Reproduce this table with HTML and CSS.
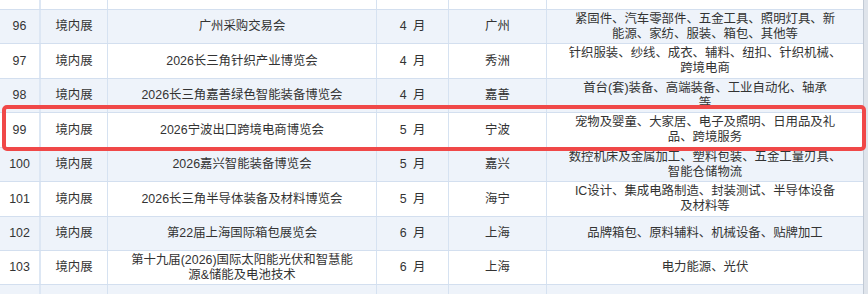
FILE: index.html
```html
<!DOCTYPE html>
<html lang="zh-CN">
<head>
<meta charset="utf-8">
<title>展会列表</title>
<link rel="stylesheet" href="styles.css">
</head>
<body>
<div class="page">
  <div class="table">
    <div class="row r95"><div class="c c1"></div><div class="c c2"></div><div class="c c3"></div><div class="c c4"></div><div class="c c5"></div><div class="c c6"></div></div>
    <div class="row alt h34"><div class="c c1">96</div><div class="c c2">境内展</div><div class="c c3">广州采购交易会</div><div class="c c4">4 月</div><div class="c c5">广州</div><div class="c c6">紧固件、汽车零部件、五金工具、照明灯具、新<br>能源、家纺、服装、箱包、其他等</div></div>
    <div class="row h35"><div class="c c1">97</div><div class="c c2">境内展</div><div class="c c3">2026长三角针织产业博览会</div><div class="c c4">4 月</div><div class="c c5">秀洲</div><div class="c c6">针织服装、纱线、成衣、辅料、纽扣、针织机械、<br>跨境电商</div></div>
    <div class="row alt h34"><div class="c c1">98</div><div class="c c2">境内展</div><div class="c c3">2026长三角嘉善绿色智能装备博览会</div><div class="c c4">4 月</div><div class="c c5">嘉善</div><div class="c c6">首台(套)装备、高端装备、工业自动化、轴承<br>等</div></div>
    <div class="row h35"><div class="c c1">99</div><div class="c c2">境内展</div><div class="c c3">2026宁波出口跨境电商博览会</div><div class="c c4">5 月</div><div class="c c5">宁波</div><div class="c c6">宠物及婴童、大家居、电子及照明、日用品及礼<br>品、跨境服务</div></div>
    <div class="row alt h34"><div class="c c1">100</div><div class="c c2">境内展</div><div class="c c3">2026嘉兴智能装备博览会</div><div class="c c4">5 月</div><div class="c c5">嘉兴</div><div class="c c6">数控机床及金属加工、塑料包装、五金工量刃具、<br>智能仓储物流</div></div>
    <div class="row h35"><div class="c c1">101</div><div class="c c2">境内展</div><div class="c c3">2026长三角半导体装备及材料博览会</div><div class="c c4">5 月</div><div class="c c5">海宁</div><div class="c c6">IC设计、集成电路制造、封装测试、半导体设备<br>及材料等</div></div>
    <div class="row alt h34"><div class="c c1">102</div><div class="c c2">境内展</div><div class="c c3">第22届上海国际箱包展览会</div><div class="c c4">6 月</div><div class="c c5">上海</div><div class="c c6">品牌箱包、原料辅料、机械设备、贴牌加工</div></div>
    <div class="row h34"><div class="c c1">103</div><div class="c c2">境内展</div><div class="c c3">第十九届(2026)国际太阳能光伏和智慧能<br>源&amp;储能及电池技术</div><div class="c c4">6 月</div><div class="c c5">上海</div><div class="c c6">电力能源、光伏</div></div>
    <div class="row alt r104"><div class="c c1"></div><div class="c c2"></div><div class="c c3"></div><div class="c c4"></div><div class="c c5"></div><div class="c c6"></div></div>
  </div>
  <div class="edge"></div>
  <div class="highlight"></div>
</div>
</body>
</html>
```

FILE: styles.css
```css
* { box-sizing: border-box; }
html, body { margin: 0; padding: 0; background: #ffffff; }
body {
  font-family: "Liberation Sans", "Noto Sans CJK SC", sans-serif;
  font-size: 12.4px;
  color: #333333;
}
.page {
  position: relative;
  display: flex;
  width: 868px;
  height: 294px;
  overflow: hidden;
}
.table {
  width: 863px;
  display: flex;
  flex-direction: column;
}
.row {
  position: relative;
  display: grid;
  grid-template-columns: 41px 67px 269px 72px 98px 316px;
  background: #ffffff;
  border-bottom: 1px solid #d3dfef;
  flex: none;
}
.row.alt { background: #eef3fa; }
.r95 { height: 10px; }
.h34 { height: 34px; }
.h35 { height: 35px; }
.r104 { height: 10px; border-bottom: none; }
.c {
  display: flex;
  align-items: center;
  justify-content: center;
  text-align: center;
  line-height: 15px;
  white-space: nowrap;
  border-right: 1px solid #d6e2f1;
  overflow: visible;
}
.c1 { border-right: 2px solid #dde7f4; }
.c4 { word-spacing: 3px; }
.c6 { border-right: none; }
.edge {
  width: 5px;
  background: #dfe4eb;
  border-left: 1px solid #c2cad5;
}
.highlight {
  position: absolute;
  left: 2px;
  top: 105px;
  width: 864px;
  height: 46px;
  border: 4px solid #f04848;
  border-radius: 5px;
}
```
